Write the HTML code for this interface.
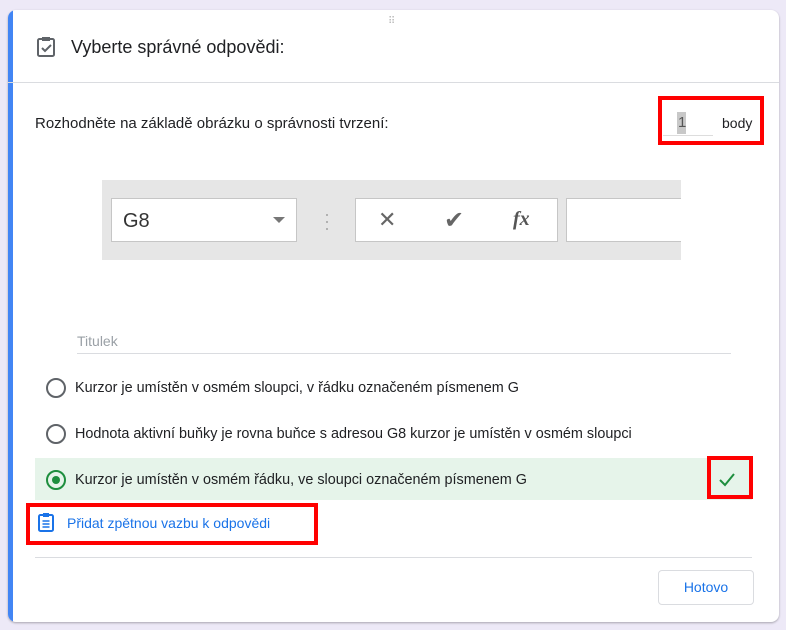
<!DOCTYPE html>
<html><head><meta charset="utf-8"><style>
body{margin:0;width:786px;height:630px;background:#ede9f7;font-family:"Liberation Sans",sans-serif;position:relative;overflow:hidden}
.card{position:absolute;left:8px;top:10px;width:771px;height:612px;background:#fff;border-radius:8px;box-shadow:0 1px 2px rgba(0,0,0,.3);overflow:hidden}
.bar{position:absolute;left:0;top:0;bottom:0;width:5px;background:#4285f4}
.abs{position:absolute}
.red{position:absolute;border:4px solid #f00;box-sizing:border-box}
.t{color:#202124;font-size:14.4px}
.radio{position:absolute;width:16px;height:16px;border:2px solid #5f6368;border-radius:50%}
</style></head><body>
<div class="card">
<div class="bar"></div>
<div class="abs" style="left:380px;top:6px;color:#bbb;font-size:10px;letter-spacing:1px">⠿</div>
<svg class="abs" style="left:28px;top:26px" width="20" height="22" viewBox="0 0 20 22"><rect x="2" y="3" width="16" height="17" rx="1.5" fill="none" stroke="#5f6368" stroke-width="2"/><rect x="6" y="1" width="8" height="4" fill="#5f6368"/><path d="M6 12l3 3 6-6" fill="none" stroke="#5f6368" stroke-width="2"/></svg>
<div class="abs" style="left:63px;top:27px;font-size:18px;color:#202124">Vyberte správné odpovědi:</div>
<div class="abs" style="left:0;right:0;top:72px;height:1px;background:#dadce0"></div>
<div class="abs t" style="left:27px;top:105px;font-size:15px">Rozhodněte na základě obrázku o správnosti tvrzení:</div>
<div class="abs" style="left:669px;top:102px;width:9px;height:22px;background:#c8c8c8"></div>
<div class="abs" style="left:670px;top:104px;font-size:15px;color:#555">1</div>
<div class="abs" style="left:655px;top:125px;width:50px;height:1px;background:#ddd"></div>
<div class="abs" style="left:714px;top:105px;font-size:14px;color:#202124">body</div>
<div class="abs" style="left:94px;top:170px;width:579px;height:80px;background:#e6e6e6"></div>
<div class="abs" style="left:103px;top:188px;width:186px;height:44px;background:#fff;border:1px solid #c6c6c6;box-sizing:border-box"></div>
<div class="abs" style="left:115px;top:200px;font-size:20px;color:#333">G8</div>
<div class="abs" style="left:265px;top:207px;border-left:6px solid transparent;border-right:6px solid transparent;border-top:6px solid #777"></div>
<div class="abs" style="left:316px;top:201px;color:#aaa;font-size:18px;line-height:7px">·<br>·<br>·</div>
<div class="abs" style="left:347px;top:188px;width:203px;height:44px;background:#fff;border:1px solid #c6c6c6;box-sizing:border-box"></div>
<div class="abs" style="left:370px;top:197px;font-size:22px;color:#666">✕</div>
<div class="abs" style="left:436px;top:196px;font-size:24px;color:#666">✔</div>
<div class="abs" style="left:505px;top:198px;font-size:20px;color:#555;font-family:'Liberation Serif',serif;font-style:italic;font-weight:bold">fx</div>
<div class="abs" style="left:558px;top:188px;width:115px;height:44px;background:#fff;border:1px solid #c6c6c6;border-right:none;box-sizing:border-box"></div>
<div class="abs" style="left:69px;top:323px;color:#9aa0a6;font-size:14px">Titulek</div>
<div class="abs" style="left:69px;top:343px;width:654px;height:1px;background:#dadce0"></div>
<div class="radio" style="left:38px;top:368px"></div>
<div class="abs t" style="left:67px;top:370px">Kurzor je umístěn v osmém sloupci, v řádku označeném písmenem G</div>
<div class="radio" style="left:38px;top:414px"></div>
<div class="abs t" style="left:67px;top:416px">Hodnota aktivní buňky je rovna buňce s adresou G8 kurzor je umístěn v osmém sloupci</div>
<div class="abs" style="left:27px;top:448px;width:717px;height:42px;background:#e6f4ea"></div>
<div class="radio" style="left:38px;top:460px;border-color:#1e8e3e"></div>
<div class="abs" style="left:44px;top:466px;width:8px;height:8px;border-radius:50%;background:#1e8e3e"></div>
<div class="abs t" style="left:67px;top:462px">Kurzor je umístěn v osmém řádku, ve sloupci označeném písmenem G</div>
<svg class="abs" style="left:710px;top:462px" width="18" height="16" viewBox="0 0 18 16"><path d="M2 8l5 5 9-11" fill="none" stroke="#1e8e3e" stroke-width="2"/></svg>
<div class="red" style="left:699px;top:446px;width:46px;height:43px"></div>
<svg class="abs" style="left:30px;top:502px" width="16" height="20" viewBox="0 0 16 20"><rect x="1" y="3" width="14" height="16" rx="1.5" fill="none" stroke="#1a73e8" stroke-width="2"/><rect x="5" y="1" width="6" height="4" fill="#1a73e8"/><path d="M4.5 9h7M4.5 12h7M4.5 15h7" stroke="#1a73e8" stroke-width="1.6"/></svg>
<div class="abs" style="left:59px;top:505px;color:#1a73e8;font-size:14px">Přidat zpětnou vazbu k odpovědi</div>
<div class="red" style="left:18px;top:493px;width:292px;height:42px"></div>
<div class="abs" style="left:27px;top:547px;width:717px;height:1px;background:#dadce0"></div>
<div class="abs" style="left:650px;top:560px;width:96px;height:35px;border:1px solid #dadce0;border-radius:4px;box-sizing:border-box;color:#1a73e8;font-size:14px;text-align:center;line-height:33px">Hotovo</div>
</div>
<div class="red" style="left:658px;top:96px;width:106px;height:49px"></div>
</body></html>
